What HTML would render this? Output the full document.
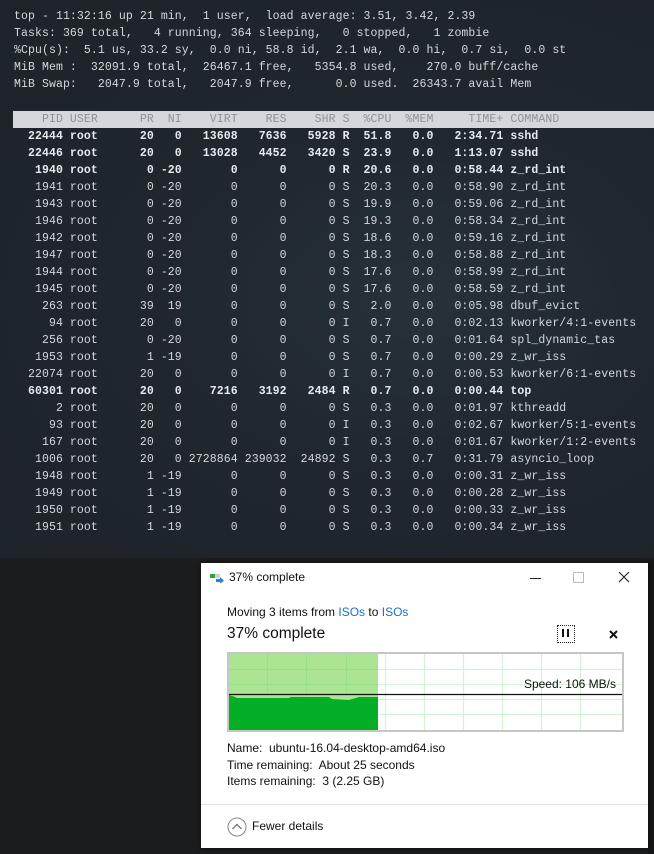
<!DOCTYPE html>
<html><head><meta charset="utf-8"><style>
html,body{margin:0;padding:0;}
body{width:654px;height:854px;position:relative;overflow:hidden;background:#1b1c1e;font-family:"Liberation Sans",sans-serif;}
#term{position:absolute;left:0;top:0;width:654px;height:558px;background:radial-gradient(ellipse at 420px 300px,#26313a 0%,#1f262d 45%,#1d2329 100%);}
pre{margin:0;position:absolute;left:14px;font-family:"Liberation Mono",monospace;font-size:11.5px;letter-spacing:0.09px;line-height:17px;color:#d4d8dc;white-space:pre;}
.b{font-weight:bold;color:#e6e9ec;}
#hb{position:absolute;left:13px;top:111px;width:641px;height:17px;background:#d4d8db;}
#dlg{position:absolute;left:201px;top:563px;width:447px;height:285px;background:#fff;box-shadow:0 0 6px rgba(0,0,0,.5);}
.t{position:absolute;white-space:nowrap;color:#111;}
a{color:#1a6fc9;text-decoration:none;}
#graph{position:absolute;left:26px;top:89px;width:393px;height:76px;border:2px solid #c6c6c6;background:#fff;overflow:hidden;}
</style></head><body>
<div id="term">
<pre style="top:8px">top - 11:32:16 up 21 min,  1 user,  load average: 3.51, 3.42, 2.39
Tasks: 369 total,   4 running, 364 sleeping,   0 stopped,   1 zombie
%Cpu(s):  5.1 us, 33.2 sy,  0.0 ni, 58.8 id,  2.1 wa,  0.0 hi,  0.7 si,  0.0 st
MiB Mem :  32091.9 total,  26467.1 free,   5354.8 used,    270.0 buff/cache
MiB Swap:   2047.9 total,   2047.9 free,      0.0 used.  26343.7 avail Mem</pre>
<div id="hb"></div>
<pre style="top:111px;color:#8a939b">    PID USER      PR  NI    VIRT    RES    SHR S  %CPU  %MEM     TIME+ COMMAND</pre>
<pre style="top:128px"><span class="b">  22444 root      20   0   13608   7636   5928 R  51.8   0.0   2:34.71 sshd</span>
<span class="b">  22446 root      20   0   13028   4452   3420 S  23.9   0.0   1:13.07 sshd</span>
<span class="b">   1940 root       0 -20       0      0      0 R  20.6   0.0   0:58.44 z_rd_int</span>
   1941 root       0 -20       0      0      0 S  20.3   0.0   0:58.90 z_rd_int
   1943 root       0 -20       0      0      0 S  19.9   0.0   0:59.06 z_rd_int
   1946 root       0 -20       0      0      0 S  19.3   0.0   0:58.34 z_rd_int
   1942 root       0 -20       0      0      0 S  18.6   0.0   0:59.16 z_rd_int
   1947 root       0 -20       0      0      0 S  18.3   0.0   0:58.88 z_rd_int
   1944 root       0 -20       0      0      0 S  17.6   0.0   0:58.99 z_rd_int
   1945 root       0 -20       0      0      0 S  17.6   0.0   0:58.59 z_rd_int
    263 root      39  19       0      0      0 S   2.0   0.0   0:05.98 dbuf_evict
     94 root      20   0       0      0      0 I   0.7   0.0   0:02.13 kworker/4:1-events
    256 root       0 -20       0      0      0 S   0.7   0.0   0:01.64 spl_dynamic_tas
   1953 root       1 -19       0      0      0 S   0.7   0.0   0:00.29 z_wr_iss
  22074 root      20   0       0      0      0 I   0.7   0.0   0:00.53 kworker/6:1-events
<span class="b">  60301 root      20   0    7216   3192   2484 R   0.7   0.0   0:00.44 top</span>
      2 root      20   0       0      0      0 S   0.3   0.0   0:01.97 kthreadd
     93 root      20   0       0      0      0 I   0.3   0.0   0:02.67 kworker/5:1-events
    167 root      20   0       0      0      0 I   0.3   0.0   0:01.67 kworker/1:2-events
   1006 root      20   0 2728864 239032  24892 S   0.3   0.7   0:31.79 asyncio_loop
   1948 root       1 -19       0      0      0 S   0.3   0.0   0:00.31 z_wr_iss
   1949 root       1 -19       0      0      0 S   0.3   0.0   0:00.28 z_wr_iss
   1950 root       1 -19       0      0      0 S   0.3   0.0   0:00.33 z_wr_iss
   1951 root       1 -19       0      0      0 S   0.3   0.0   0:00.34 z_wr_iss</pre>
</div>
<div style="position:absolute;left:648px;top:560px;width:6px;height:294px;background:#151617"></div>
<div id="dlg">
  <svg style="position:absolute;left:9px;top:10px" width="14" height="10"><rect x="0" y="1" width="5" height="4" fill="#2aa83a"/><rect x="5" y="1" width="5" height="4" fill="#cfd3d6"/><path d="M6 6 h4 v-2 l4 3.5 l-4 3.5 v-2 h-4z" fill="#2b7fd8"/></svg>
  <div class="t" style="left:28px;top:7px;font-size:12px">37% complete</div>
  <div style="position:absolute;left:329px;top:15px;width:11px;height:1px;background:#222"></div>
  <div style="position:absolute;left:372px;top:9px;width:9px;height:9px;border:1px solid #bbb"></div>
  <svg style="position:absolute;left:417px;top:8px" width="12" height="12"><path d="M1 1 L11 11 M11 1 L1 11" stroke="#222" stroke-width="1.1"/></svg>
  <div class="t" style="left:26px;top:42px;font-size:12px">Moving 3 items from <a>ISOs</a> to <a>ISOs</a></div>
  <div class="t" style="left:26px;top:62px;font-size:15.5px">37% complete</div>
  <div style="position:absolute;left:356px;top:62px;width:16px;height:16px;border:1px dotted #222"></div>
  <div style="position:absolute;left:361px;top:66px;width:2px;height:8px;background:#111"></div>
  <div style="position:absolute;left:366px;top:66px;width:2px;height:8px;background:#111"></div>
  <svg style="position:absolute;left:408px;top:67px" width="9" height="9"><path d="M1 1 L8 8 M8 1 L1 8" stroke="#111" stroke-width="2"/></svg>
  <div id="graph">
    <svg width="393" height="76" style="position:absolute;left:0;top:0">
      <rect x="0" y="0" width="149" height="76" fill="#abe492"/>
      <path d="M0 41 L6 43 L8 44 L60 44 L62 43 L100 43 L103 45 L120 46 L130 43 L149 43 L149 76 L0 76Z" fill="#05ae27"/>
      <g stroke="#96e089" stroke-width="1">
        <path d="M38.5 0 V41 M77.5 0 V41 M117.5 0 V41 M0 15.5 H149 M0 30.5 H149"/>
      </g>
      <g stroke="#d3f2d6" stroke-width="1.2">
        <path d="M156.5 0 V76 M195.5 0 V76 M234.5 0 V76 M273.5 0 V76 M312.5 0 V76 M351.5 0 V76 M149 15.5 H393 M149 30.5 H393 M149 45.5 H393 M149 60.5 H393"/>
      </g>
      <path d="M0 40.5 H393" stroke="#111" stroke-width="1.2"/>
    </svg>
    <div class="t" style="right:6px;top:23px;font-size:12px">Speed: 106 MB/s</div>
  </div>
  <div class="t" style="left:26px;top:178px;font-size:12px">Name:&nbsp; ubuntu-16.04-desktop-amd64.iso</div>
  <div class="t" style="left:26px;top:195px;font-size:12px">Time remaining:&nbsp; About 25 seconds</div>
  <div class="t" style="left:26px;top:211px;font-size:12px">Items remaining:&nbsp; 3 (2.25 GB)</div>
  <div style="position:absolute;left:0;top:241px;width:447px;height:1px;background:#e2e2e2"></div>
  <svg style="position:absolute;left:26px;top:254px" width="20" height="20"><circle cx="10" cy="10" r="9" fill="none" stroke="#888" stroke-width="1"/><path d="M5.5 12 L10 7.5 L14.5 12" fill="none" stroke="#666" stroke-width="1.2"/></svg>
  <div class="t" style="left:51px;top:256px;font-size:12px">Fewer details</div>
</div>
</body></html>
